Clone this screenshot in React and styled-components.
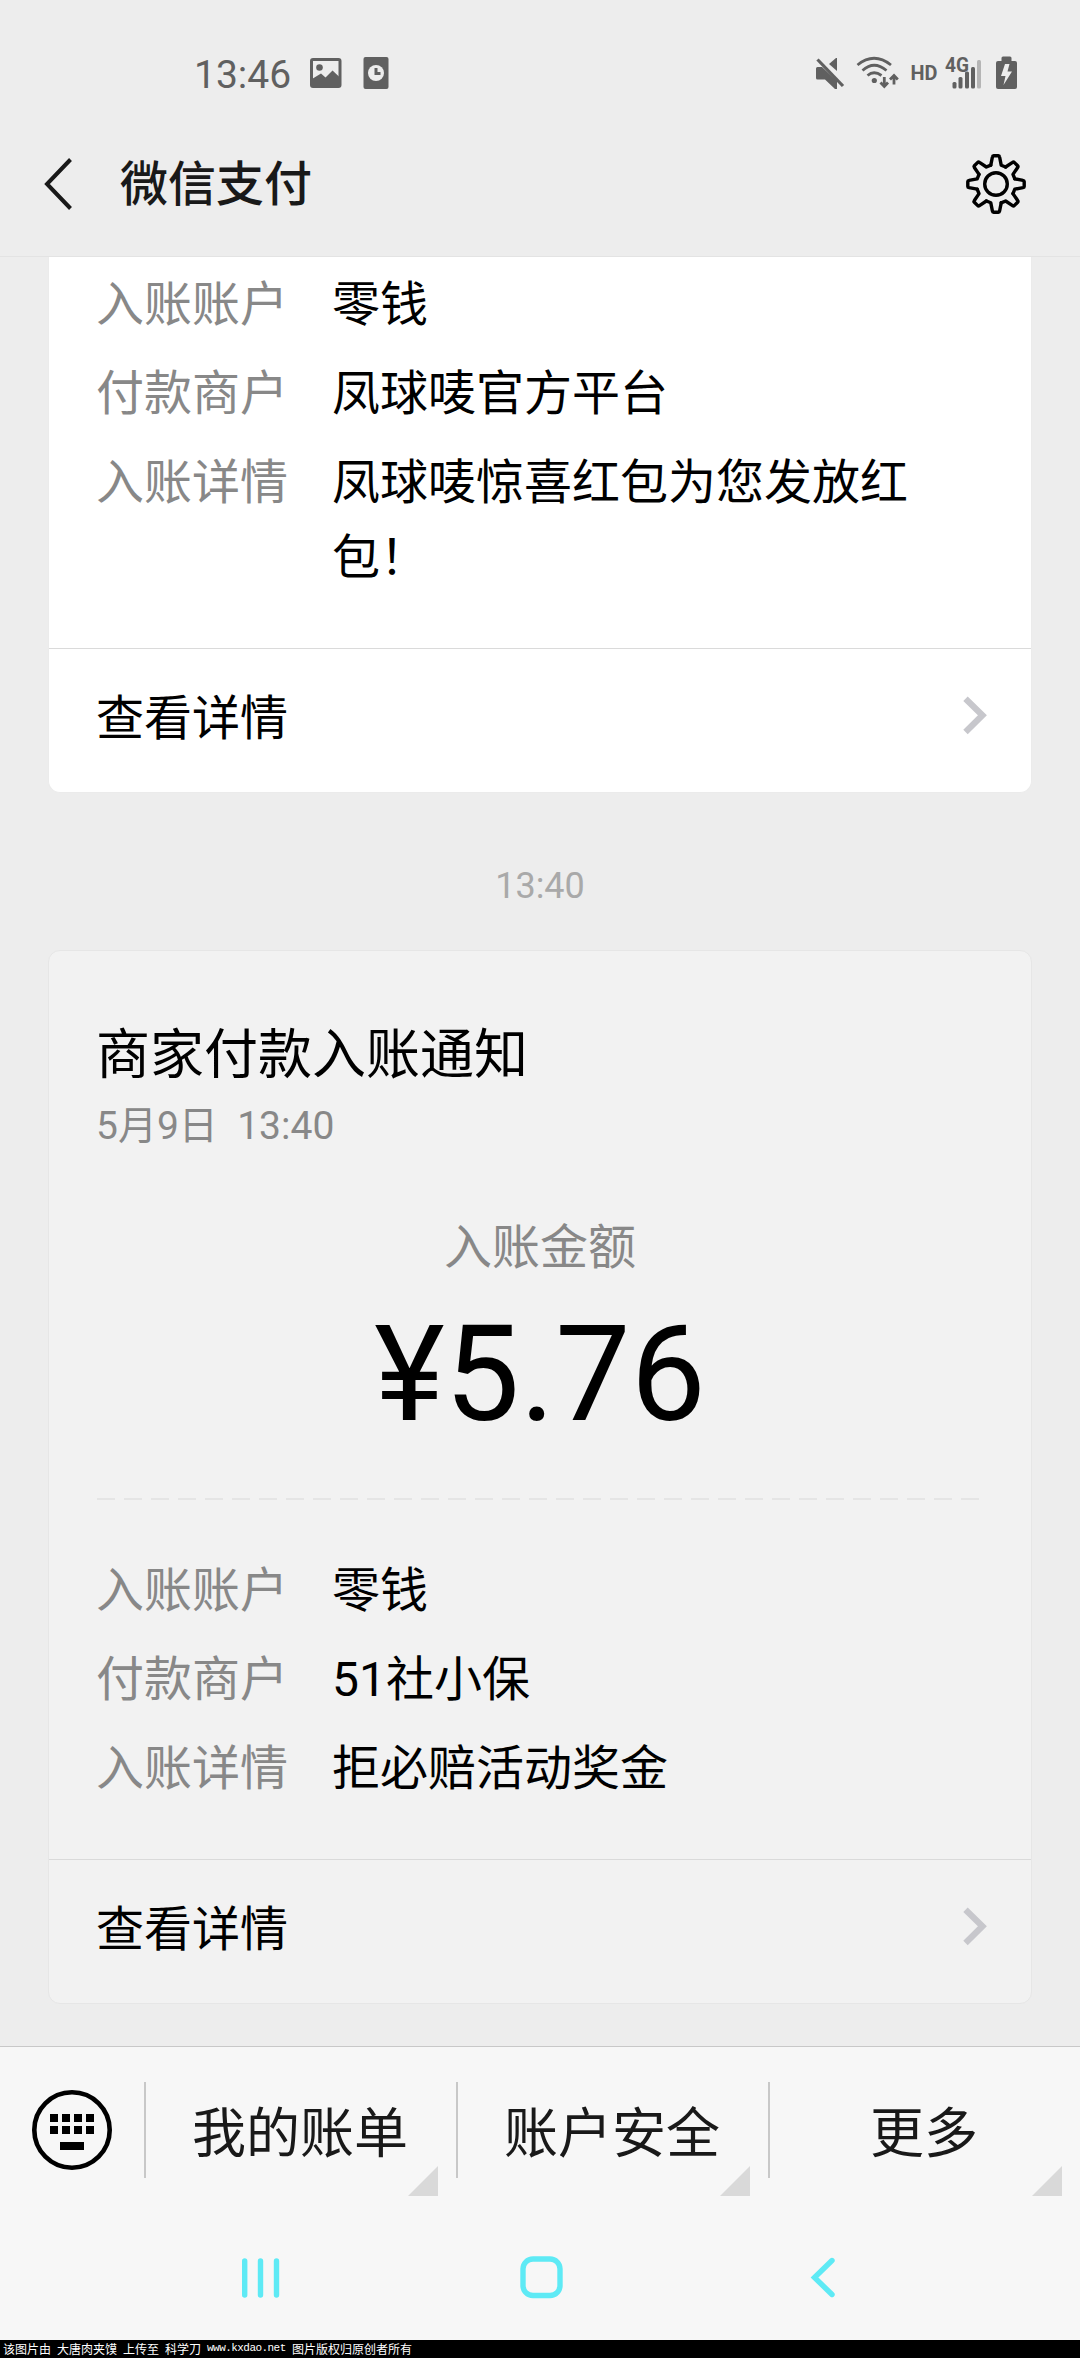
import styled, { createGlobalStyle } from 'styled-components'

const GlobalStyle = createGlobalStyle`
  * {
    box-sizing: border-box;
  }
  body {
    margin: 0;
    background: #ededed;
    font-family: Roboto, 'Noto Sans CJK SC', sans-serif;
  }
`

const lastPayment = [
  { label: '入账账户', value: '零钱' },
  { label: '付款商户', value: '凤球唛官方平台' },
  { label: '入账详情', value: '凤球唛惊喜红包为您发放红包！' },
]

const currentPayment = [
  { label: '入账账户', value: '零钱' },
  { label: '付款商户', value: '51社小保' },
  { label: '入账详情', value: '拒必赔活动奖金' },
]

const menu = ['我的账单', '账户安全', '更多']

export default function App() {
  return (
    <>
      <GlobalStyle />
      <Screen>
        <StatusBar>
          <StatusGroup>
            <Clock>13:46</Clock>
            <NotificationIcons />
          </StatusGroup>
          <SystemIcons />
        </StatusBar>
        <Header>
          <BackIcon />
          <Title>微信支付</Title>
          <GearIcon />
        </Header>
        <Chat>
          <Card $cut>
            <Details rows={lastPayment} />
            <DetailLink />
          </Card>
          <TimeStamp>13:40</TimeStamp>
          <Card $pressed>
            <CardHead>
              <CardTitle>商家付款入账通知</CardTitle>
              <CardDate>5月9日&nbsp; 13:40</CardDate>
            </CardHead>
            <AmountLabel>入账金额</AmountLabel>
            <Amount>¥5.76</Amount>
            <Dashes />
            <Details rows={currentPayment} />
            <DetailLink />
          </Card>
        </Chat>
        <MenuBar>
          <KeyboardButton>
            <KeyboardIcon />
          </KeyboardButton>
          {menu.map((item) => (
            <MenuItem key={item}>
              {item}
              <Corner />
            </MenuItem>
          ))}
        </MenuBar>
        <NavBar>
          <NavIcons />
        </NavBar>
        <Credit>
          <span>该图片由</span>
          <span>大唐肉夹馍</span>
          <span>上传至</span>
          <span>科学刀</span>
          <Url>www.kxdao.net</Url>
          <span>图片版权归原创者所有</span>
        </Credit>
      </Screen>
    </>
  )
}

function Details({ rows }) {
  return (
    <DetailList>
      {rows.map((row) => (
        <DetailRow key={row.label}>
          <Label>{row.label}</Label>
          <Value>{row.value}</Value>
        </DetailRow>
      ))}
    </DetailList>
  )
}

function DetailLink() {
  return (
    <LinkRow>
      查看详情
      <Chevron width='26' height='40' viewBox='0 0 26 40' fill='none' stroke='#c7c7cc' strokeWidth='6.3'>
        <path d='M2.5 3.7L19.4 20.3L2.5 36.9' />
      </Chevron>
    </LinkRow>
  )
}

function NotificationIcons() {
  return (
    <svg width='80' height='34' viewBox='0 0 80 34'>
      <rect x='1.5' y='3.5' width='28.5' height='27' rx='1.5' fill='none' stroke='#606060' strokeWidth='3' />
      <circle cx='9.5' cy='11.5' r='3.3' fill='#606060' />
      <path d='M2 23L11 17.5L15.5 21.5L22.5 14.5L30 21.5V31H2Z' fill='#606060' />
      <rect x='53.5' y='1' width='25' height='32' rx='2' fill='#606060' />
      <circle cx='66' cy='17' r='8' fill='#ededed' />
      <path d='M66 12V17.5H70.5' fill='none' stroke='#606060' strokeWidth='3' />
    </svg>
  )
}

function SystemIcons() {
  return (
    <svg width='204' height='52' viewBox='815 47 204 52' fill='#606060'>
      <path d='M816 68.5Q816 67 817.5 67H822L837 81V89H835L825 79.5H817.5Q816 79.5 816 78Z' />
      <path d='M829 64L836 58H837V71Z' />
      <path d='M817.5 59.5L843 86' stroke='#606060' strokeWidth='3.2' />
      <g fill='none' stroke='#606060' strokeWidth='2.8'>
        <path d='M857.5 65Q874 51.5 891 65' />
        <path d='M862.5 70.5Q874 60 886.5 70.5' />
        <path d='M867.5 75.5Q874 70 881.5 75.5' />
        <path d='M884.3 77V86M880.5 82.5L884.3 86.5L888 82.5M894 84.5V75.5M890 79.5L894 75.5L897.8 79.5' />
      </g>
      <circle cx='874.3' cy='80.5' r='2.6' />
      <text x='910.5' y='80' fontSize='20' fontWeight='700' textLength='27' lengthAdjust='spacingAndGlyphs'>HD</text>
      <text x='945' y='71.5' fontSize='19.5' fontWeight='700' textLength='24' lengthAdjust='spacingAndGlyphs'>4G</text>
      <rect x='952.5' y='82' width='4' height='6.5' rx='1.5' />
      <rect x='958.5' y='77' width='4' height='11.5' rx='1.5' />
      <rect x='965' y='71.5' width='4' height='17' rx='1.5' />
      <rect x='971' y='67' width='4' height='21.5' rx='1.5' />
      <rect x='977' y='60' width='4' height='28.5' rx='1.5' fill='#b5b5b5' />
      <rect x='1001.5' y='56.5' width='10' height='8' rx='1.5' />
      <rect x='996' y='61' width='21' height='28' rx='2' />
      <path d='M1005 64L1001 76H1005.5L1003.5 85L1012 71.5H1007.5L1009.5 64Z' fill='#ededed' />
    </svg>
  )
}

function BackIcon() {
  return (
    <svg width='32' height='56' viewBox='0 0 32 56' fill='none' stroke='#191919' strokeWidth='4'>
      <path d='M26.5 3.5L3 28L26.5 52.5' />
    </svg>
  )
}

function GearIcon() {
  const tooth = 'M-5.2 -18.8L-3.6 -27Q-3.4 -28.2 -2.4 -28.2H2.4Q3.4 -28.2 3.6 -27L5.2 -18.8L9.6 -17'
  return (
    <svg width='64' height='64' viewBox='-32 -32 64 64' fill='none' stroke='#000' strokeWidth='3.4' strokeLinejoin='round' strokeLinecap='round'>
      <circle r='11.3' />
      {[0, 45, 90, 135, 180, 225, 270, 315].map((angle) => (
        <path key={angle} d={tooth} transform={`rotate(${angle})`} />
      ))}
    </svg>
  )
}

function KeyboardIcon() {
  return (
    <svg width='80' height='80' viewBox='0 0 80 80'>
      <circle cx='40' cy='40' r='37.7' fill='none' stroke='#000' strokeWidth='4.6' />
      {[24, 36].map((y) => [18, 30, 42, 54].map((x) => <rect key={`${x}-${y}`} x={x} y={y} width='8' height='8' />))}
      <rect x='28' y='52' width='24' height='8' />
    </svg>
  )
}

function NavIcons() {
  return (
    <svg width='600' height='48' viewBox='240 2254 600 48' fill='none' stroke='#5eeaf5' strokeWidth='5.4' strokeLinecap='round'>
      <path d='M244.7 2261V2295M260.5 2261V2295M276.5 2261V2295' />
      <rect x='523' y='2259' width='37' height='36.5' rx='10' />
      <path d='M832 2260.5L814.5 2277.5L832 2294.5' />
    </svg>
  )
}

const Screen = styled.div`
  display: flex;
  flex-direction: column;
  width: 1080px;
  height: 2358px;
  overflow: hidden;
  background: #ededed;
`

const StatusBar = styled.div`
  display: flex;
  justify-content: space-between;
  align-items: center;
  height: 112px;
  padding: 34px 61px 0 194px;
`

const StatusGroup = styled.div`
  display: flex;
  align-items: center;
  gap: 19px;
`

const Clock = styled.span`
  padding-top: 3px;
  font-size: 39px;
  line-height: 46px;
  color: #606060;
`

const Header = styled.header`
  display: flex;
  align-items: center;
  height: 145px;
  padding: 0 52px 0 44px;
  border-bottom: 1px solid #e3e3e3;
`

const Title = styled.h1`
  flex: 1;
  margin: 0 0 0 44px;
  padding-top: 1px;
  font-size: 48px;
  font-weight: 500;
  line-height: 72px;
  color: #191919;
`

const Chat = styled.main`
  flex: 1;
  padding: 0 48px;
`

const Card = styled.section`
  border: 1px solid ${({ $pressed }) => ($pressed ? '#e6e6e6' : '#ebebeb')};
  border-top-width: ${({ $cut }) => ($cut ? '0' : '1px')};
  border-radius: ${({ $cut }) => ($cut ? '0 0 12px 12px' : '12px')};
  background: ${({ $pressed }) => ($pressed ? '#f2f2f2' : '#fff')};
`

const TimeStamp = styled.div`
  padding-top: 65px;
  height: 157px;
  font-size: 36px;
  line-height: 56px;
  text-align: center;
  color: #a9a9a9;
`

const CardHead = styled.div`
  padding: 65px 47px 0;
`

const CardTitle = styled.h2`
  margin: 0;
  font-size: 54px;
  font-weight: 400;
  line-height: 80px;
  color: #000;
`

const CardDate = styled.div`
  font-size: 39px;
  line-height: 60px;
  color: #888;
`

const AmountLabel = styled.div`
  margin-top: 56px;
  font-size: 48px;
  line-height: 72px;
  text-align: center;
  color: #888;
`

const Amount = styled.div`
  margin-top: 13px;
  font-size: 134px;
  line-height: 155px;
  text-align: center;
  color: #000;
`

const Dashes = styled.div`
  height: 2px;
  margin: 46px 52px 43px 48px;
  background: repeating-linear-gradient(to right, #e5e5e5 0 18px, transparent 18px 27px);
`

const DetailList = styled.div`
  display: flex;
  flex-direction: column;
  gap: 14px;
  padding: 10px 47px 53px;
`

const DetailRow = styled.div`
  display: flex;
  font-size: 48px;
  line-height: 75px;
`

const Label = styled.span`
  width: 236px;
  flex-shrink: 0;
  color: #888;
`

const Value = styled.span`
  width: 600px;
  color: #000;
`

const LinkRow = styled.div`
  display: flex;
  justify-content: space-between;
  align-items: center;
  height: 144px;
  padding: 0 42px 4px 47px;
  border-top: 1px solid #dadada;
  font-size: 48px;
  line-height: 72px;
  color: #000;
`

const Chevron = styled.svg`
  margin-bottom: 8px;
`

const MenuBar = styled.nav`
  display: flex;
  height: 168px;
  border-top: 1px solid #c8c8c8;
  background: #f7f7f7;
`

const KeyboardButton = styled.div`
  width: 144px;
  padding: 43px 32px;
`

const MenuItem = styled.div`
  position: relative;
  flex: 1;
  display: flex;
  justify-content: center;
  height: 96px;
  margin-top: 35px;
  padding-right: 2px;
  border-left: 2px solid #c8c8c8;
  font-size: 54px;
  line-height: 106px;
  color: #191919;
`

const Corner = styled.span`
  position: absolute;
  right: 18px;
  bottom: -18px;
  width: 30px;
  height: 30px;
  background: #d9d9d9;
  clip-path: polygon(100% 0, 100% 100%, 0 100%);
`

const NavBar = styled.div`
  display: flex;
  justify-content: center;
  height: 126px;
  padding-top: 40px;
  background: #f7f7f7;
`

const Credit = styled.footer`
  display: flex;
  gap: 6px;
  height: 18px;
  padding-left: 3px;
  background: #000;
  color: #fff;
  font-family: 'Noto Sans CJK SC', sans-serif;
  font-size: 12px;
  line-height: 17px;
  white-space: nowrap;
`

const Url = styled.span`
  width: 79px;
  font-family: 'Liberation Mono', monospace;
  font-size: 11px;
  letter-spacing: -0.55px;
`
